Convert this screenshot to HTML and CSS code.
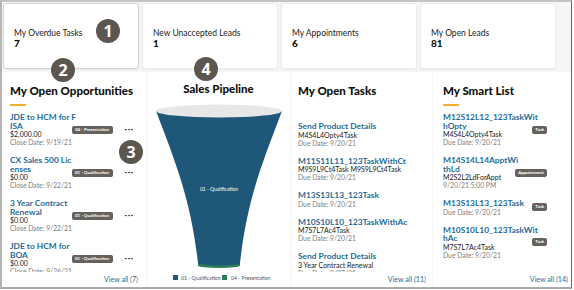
FILE: index.html
```html
<!DOCTYPE html>
<html lang="en">
<head>
    <meta charset="UTF-8">
    <meta name="viewport" content="width=device-width, initial-scale=1.0">
    <title>Sales Home</title>
    <link rel="stylesheet" href="styles.css">
</head>
<body>
    <div class="frame">
        <div class="cards">
            <div class="card selected">
                <div class="card-label">My Overdue Tasks</div>
                <div class="card-count">7</div>
            </div>
            <div class="card">
                <div class="card-label">New Unaccepted Leads</div>
                <div class="card-count">1</div>
            </div>
            <div class="card">
                <div class="card-label">My Appointments</div>
                <div class="card-count">6</div>
            </div>
            <div class="card">
                <div class="card-label">My Open Leads</div>
                <div class="card-count">81</div>
            </div>
        </div>

        <div class="panels">
            <!-- oportunidades -->
            <div class="panel opps">
                <h2>My Open Opportunities</h2>
                <div class="accent"></div>
                <div class="list">
                    <div class="item">
                        <div class="info">
                            <a class="title">JDE to HCM for F<br>ISA</a>
                            <div class="sub">$2,000.00</div>
                            <div class="date">Close Date: 9/19/21</div>
                        </div>
                        <span class="tag wide">04 - Presentation</span>
                        <span class="more">•••</span>
                    </div>
                    <div class="item">
                        <div class="info">
                            <a class="title">CX Sales 500 Lic<br>enses</a>
                            <div class="sub">$0.00</div>
                            <div class="date">Close Date: 9/22/21</div>
                        </div>
                        <span class="tag wide">01 - Qualification</span>
                        <span class="more">•••</span>
                    </div>
                    <div class="item">
                        <div class="info">
                            <a class="title">3 Year Contract<br>Renewal</a>
                            <div class="sub">$0.00</div>
                            <div class="date">Close Date: 9/22/21</div>
                        </div>
                        <span class="tag wide">01 - Qualification</span>
                        <span class="more">•••</span>
                    </div>
                    <div class="item">
                        <div class="info">
                            <a class="title">JDE to HCM for<br>BOA</a>
                            <div class="sub">$0.00</div>
                            <div class="date">Close Date: 9/26/21</div>
                        </div>
                        <span class="tag wide">01 - Qualification</span>
                        <span class="more">•••</span>
                    </div>
                </div>
                <a class="view-all">View all (7)</a>
            </div>

            <!-- funil -->
            <div class="panel pipeline">
                <h2>Sales Pipeline</h2>
                <svg class="funnel" width="144" height="189" viewBox="0 0 144 189">
                    <rect x="51" y="167" width="42" height="3" fill="#2d7c5c"/>
                    <ellipse cx="72" cy="169.5" rx="21" ry="2.6" fill="#2d7c5c"/>
                    <path d="M9,15 C30,70 44,105 51,167 A21,2.5 0 0 0 93,167 C100,105 114,70 135,15 Z" fill="#1e5777"/>
                    <ellipse cx="72" cy="15" rx="63" ry="6.5" fill="#e7e7e7"/>
                    <text x="72" y="94.8" class="funnel-label">01 - Qualification</text>
                    <rect x="26" y="179" width="5" height="5" fill="#1e5777"/>
                    <text x="34" y="183.6" class="legend">01 - Qualification</text>
                    <rect x="75" y="179" width="5" height="5" fill="#2d7c5c"/>
                    <text x="84" y="183.6" class="legend">04 - Presentation</text>
                </svg>
            </div>

            <!-- tarefas -->
            <div class="panel tasks">
                <h2>My Open Tasks</h2>
                <div class="list">
                    <div class="item">
                        <div class="info">
                            <a class="title">Send Product Details</a>
                            <div class="sub">M4S4L4Opty4Task</div>
                            <div class="date">Due Date: 9/20/21</div>
                        </div>
                    </div>
                    <div class="item">
                        <div class="info">
                            <a class="title">M11S11L11_123TaskWithCt</a>
                            <div class="sub">M9S9L9Ct4Task M9S9L9Ct4Task</div>
                            <div class="date">Due Date: 9/20/21</div>
                        </div>
                    </div>
                    <div class="item">
                        <div class="info">
                            <a class="title">M13S13L13_123Task</a>
                            <div class="date">Due Date: 9/20/21</div>
                        </div>
                    </div>
                    <div class="item">
                        <div class="info">
                            <a class="title">M10S10L10_123TaskWithAc</a>
                            <div class="sub">M7S7L7Ac4Task</div>
                            <div class="date">Due Date: 9/20/21</div>
                        </div>
                    </div>
                    <div class="item">
                        <div class="info">
                            <a class="title">Send Product Details</a>
                            <div class="sub">3 Year Contract Renewal</div>
                            <div class="date">Due Date: 9/27/21</div>
                        </div>
                    </div>
                </div>
                <a class="view-all">View all (11)</a>
            </div>

            <!-- smart list -->
            <div class="panel smart">
                <h2>My Smart List</h2>
                <div class="accent"></div>
                <div class="list">
                    <div class="item">
                        <div class="info">
                            <a class="title">M12S12L12_123TaskWit<br>hOpty</a>
                            <div class="sub">M4S4L4Opty4Task</div>
                            <div class="date">Due Date: 9/20/21</div>
                        </div>
                        <span class="tag">Task</span>
                    </div>
                    <div class="item">
                        <div class="info">
                            <a class="title">M14S14L14ApptWi<br>thLd</a>
                            <div class="sub">M2S2L2LdForAppt</div>
                            <div class="date">9/20/21 5:00 PM</div>
                        </div>
                        <span class="tag">Appointment</span>
                    </div>
                    <div class="item">
                        <div class="info">
                            <a class="title">M13S13L13_123Task</a>
                            <div class="date">Due Date: 9/20/21</div>
                        </div>
                        <span class="tag">Task</span>
                    </div>
                    <div class="item">
                        <div class="info">
                            <a class="title">M10S10L10_123TaskWit<br>hAc</a>
                            <div class="sub">M7S7L7Ac4Task</div>
                            <div class="date">Due Date: 9/20/21</div>
                        </div>
                        <span class="tag">Task</span>
                    </div>
                </div>
                <a class="view-all">View all (14)</a>
            </div>
        </div>

        <span class="marker m1">1</span>
        <span class="marker m2">2</span>
        <span class="marker m3">3</span>
        <span class="marker m4">4</span>
    </div>
</body>
</html>
```

FILE: styles.css
```css
body {
    margin: 0;
    background: #fff;
    font-family: Lato, "Noto Sans", sans-serif;
    color: #1a1a1a;
}
.frame {
    position: relative;
    width: 572px;
    height: 289px;
    box-sizing: border-box;
    border-top: 2px solid #c4c4c4;
    border-left: 2px solid #b4b4b4;
    border-right: 1px solid #666;
    border-bottom: 2px solid #ababab;
    overflow: hidden;
    display: flex;
    flex-direction: column;
}

/* cartoes do topo */
.cards {
    display: grid;
    grid-template-columns: repeat(4, 136px);
    gap: 3px;
    padding: 1px 1px 3px 1px;
    background: #f6f6f6;
}
.card {
    height: 66px;
    box-sizing: border-box;
    background: #fff;
    border: 1px solid #ececec;
    border-radius: 3px;
    padding: 24px 10px 0;
    box-shadow: 0 1px 2px rgba(0,0,0,0.06);
}
.card.selected {
    border-color: #d2d2d2;
}
.card-label {
    font-size: 8.5px;
    line-height: 11px;
    color: #222;
}
.card-count {
    font-size: 10px;
    line-height: 9px;
    font-weight: 900;
    color: #111;
}

/* paineis */
.panels {
    flex: 1;
    min-height: 0;
    display: grid;
    grid-template-columns: 144px 144px 142px minmax(0, 1fr);
}
.panel {
    display: flex;
    flex-direction: column;
    min-height: 0;
    min-width: 0;
    padding: 0 8px;
}
.panel + .panel {
    border-left: 1px dotted #ececec;
}
.panel h2 {
    margin: 12px 0 0;
    font-size: 11.5px;
    line-height: 14px;
    font-weight: 900;
    color: #111;
    white-space: nowrap;
}
.accent {
    width: 16px;
    height: 2px;
    margin-top: 6px;
    background: #f3b131;
}
.list {
    flex: 1;
    min-height: 0;
    overflow: hidden;
    margin-top: 2px;
}
.item {
    display: flex;
    align-items: center;
    gap: 7px;
    padding: 5px 0;
}
.info {
    flex: 1;
    min-width: 0;
}
.title {
    display: block;
    font-size: 8.4px;
    line-height: 8.5px;
    font-weight: 700;
    color: #1f6b97;
    white-space: nowrap;
}
.sub {
    font-size: 7px;
    line-height: 8px;
    color: #1a1a1a;
    white-space: nowrap;
}
.date {
    font-size: 6.8px;
    line-height: 8px;
    color: #808080;
    white-space: nowrap;
}
.tag {
    flex-shrink: 0;
    height: 8px;
    line-height: 8px;
    padding: 0 3px;
    border-radius: 2px;
    background: #67615d;
    color: #fff;
    font-size: 4.4px;
    font-weight: 700;
    white-space: nowrap;
}
.tag.wide {
    width: 41px;
    box-sizing: border-box;
    text-align: center;
    padding: 0;
}
.more {
    flex-shrink: 0;
    margin: 0 4px 0 5px;
    font-size: 4.4px;
    letter-spacing: 0.6px;
    color: #222;
}
.view-all {
    align-self: flex-end;
    margin: 3px 0 2px;
    font-size: 7.1px;
    line-height: 10px;
    color: #1f6b97;
    white-space: nowrap;
}

.opps {
    padding-left: 8px;
}
.pipeline {
    padding: 0;
    align-items: center;
}
.pipeline h2 {
    margin-top: 10px;
}
.funnel {
    display: block;
}
.funnel-label {
    font-family: Lato, sans-serif;
    font-size: 5px;
    fill: #fff;
    text-anchor: middle;
}
.legend {
    font-family: Lato, sans-serif;
    font-size: 5.2px;
    fill: #555;
}
.tasks {
    padding: 0 6px 0 7px;
}
.tasks .list {
    margin-top: 19px;
}
.smart {
    padding: 0 3px 0 10px;
}
.smart .item {
    padding-right: 21px;
}

/* marcadores numerados */
.marker {
    position: absolute;
    width: 24px;
    height: 24px;
    border-radius: 50%;
    background: #5c5651;
    color: #fff;
    font-family: "Open Sans", sans-serif;
    font-weight: 700;
    font-size: 16px;
    line-height: 24px;
    text-align: center;
}
.m1 { left: 94px; top: 17px; }
.m2 { left: 49px; top: 56px; }
.m3 { left: 117px; top: 138px; }
.m4 { left: 192px; top: 55px; }
```
